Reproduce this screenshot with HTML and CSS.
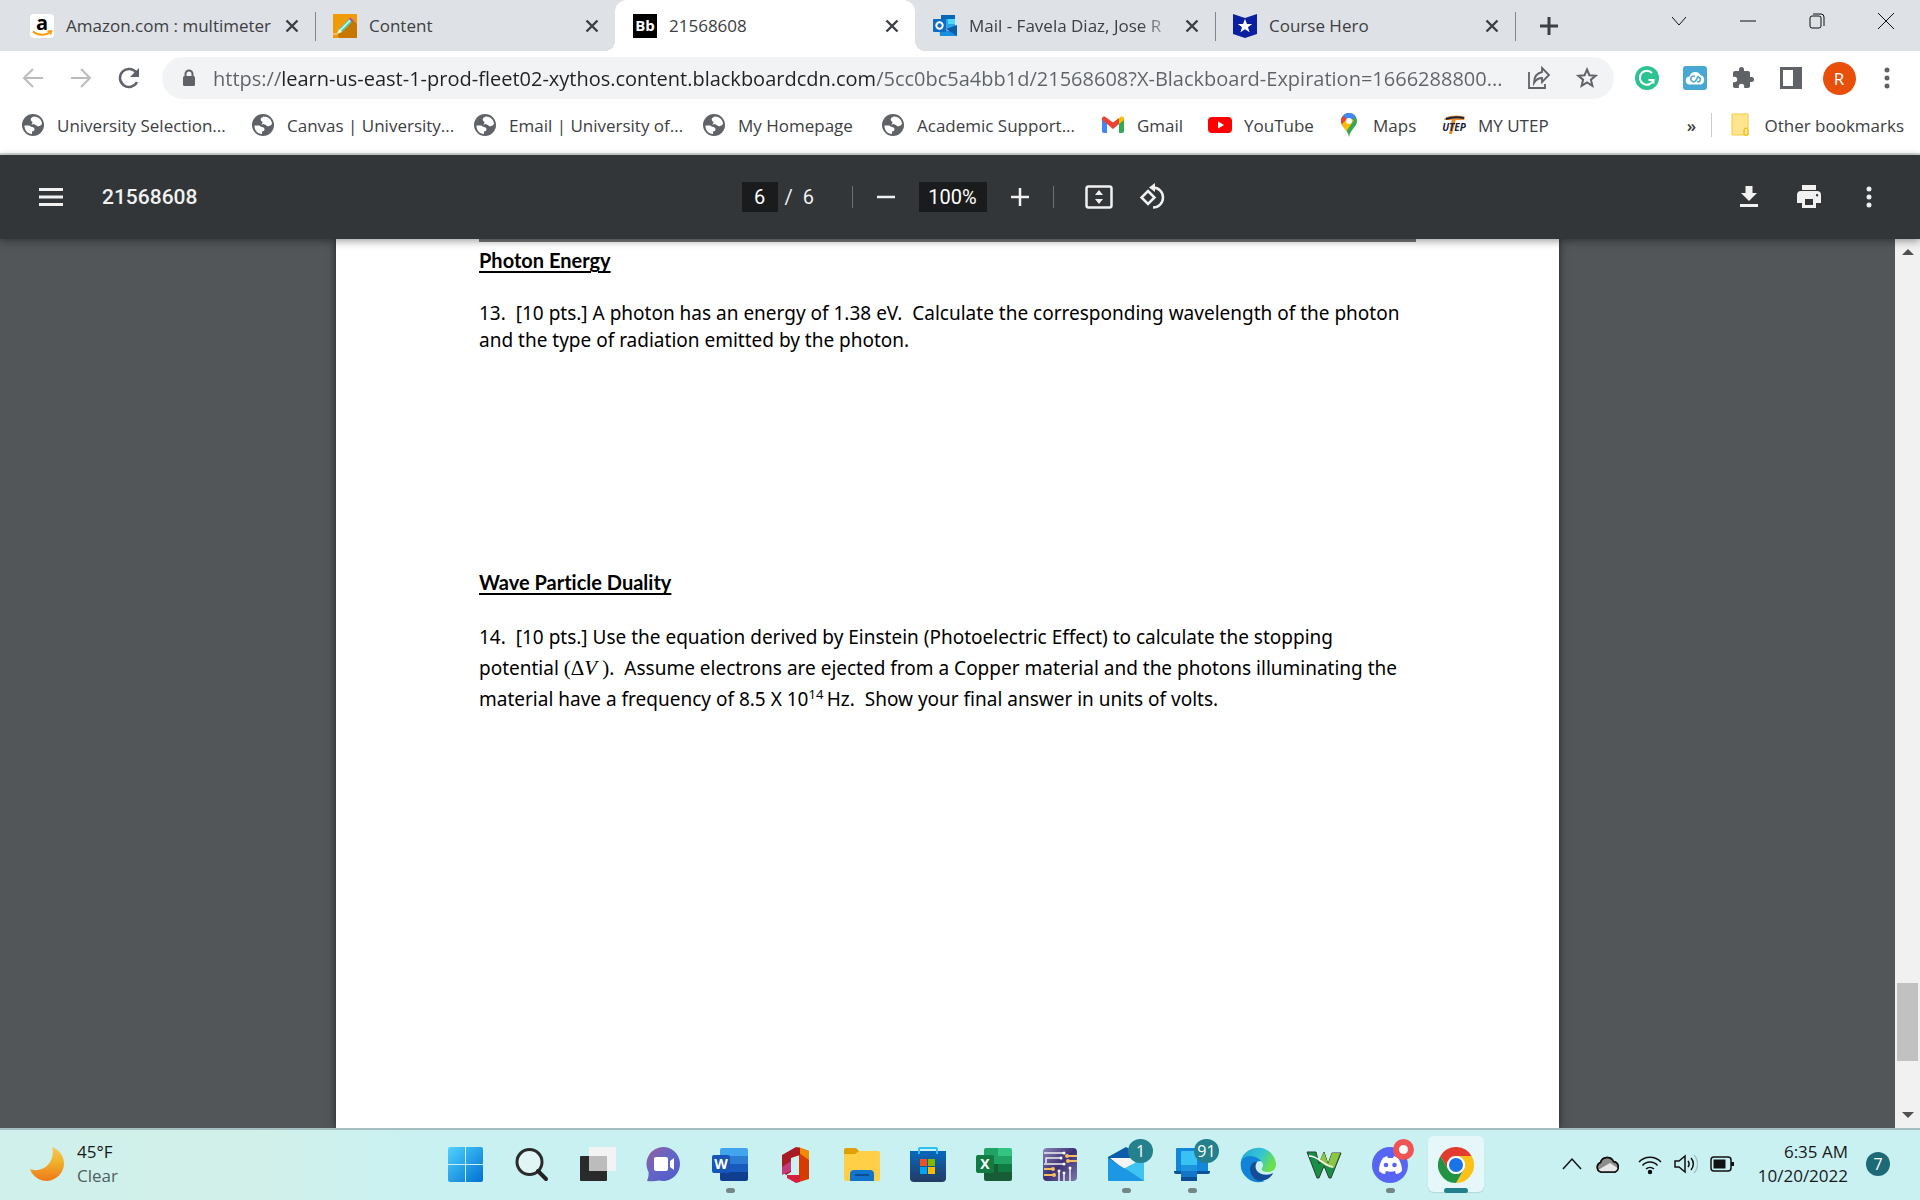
FILE: index.html
```html
<!DOCTYPE html>
<html lang="en">
<head>
    <meta charset="UTF-8">
    <meta name="viewport" content="width=device-width, initial-scale=1.0">
    <title>21568608</title>
    <link rel="stylesheet" href="styles.css">
</head>
<body>
    <!-- Shared icons -->
    <svg class="sprite" aria-hidden="true">
        <symbol id="close" viewBox="0 0 24 24"><path d="M6.500 6.500l11 11M17.500 6.500l-11 11" stroke="#3c4043" stroke-width="2.400"/></symbol>
        <symbol id="globe" viewBox="0 0 24 24"><circle cx="12" cy="12" r="11" fill="#5f6368"/><path d="M3.500 12.500H8c1 0 1.500 1.500 3 1.500 1.500 0 2.500 1 2.500 2.500 0 1.400-1 1.800-2.500 2v2.500c-4.500 0-7.700-4-7.500-8.500z" fill="#fff"/><path d="M12.500 3.500c-1.500 1-2.800 1.500-2.800 3.200 0 1.500 1.800 1.300 1.800 2.800 0 1-.8 1.500-1.500 1.500 1 .8 3.500.2 4.800 1 1 1 2.500 2 4.700.5l1.500-1.500c0-4-3.500-7.500-8.500-7.500z" fill="#fff"/></symbol>
        <symbol id="dots" viewBox="0 0 24 24"><circle cx="12" cy="4" r="2.500"/><circle cx="12" cy="12" r="2.500"/><circle cx="12" cy="20" r="2.500"/></symbol>
    </svg>

    <header class="browser">
        <div class="tab-strip">
            <div class="tab">
                <svg class="icon" viewBox="0 0 24 24"><rect width="24" height="24" rx="4" fill="#fff"/><text x="12" y="16" text-anchor="middle" class="logo-text" font-size="20">a</text><path d="M3 17.500c5 4.300 12.500 4.300 17 .8" fill="none" stroke="#f90" stroke-width="2"/><path d="M17.500 17.300l4-.4-1 3.800" fill="none" stroke="#f90" stroke-width="1.500"/></svg>
                <span class="tab-title">Amazon.com : multimeter</span>
                <button class="tab-close" aria-label="Close tab"><svg><use href="#close"/></svg></button>
            </div>
            <div class="tab divided">
                <svg class="icon" viewBox="0 0 24 24"><rect width="24" height="24" fill="#f09a0a"/><path d="M20 6l4 4v14H6l-2-4z" fill="#c77700"/><path d="M4 20l2-5L16 5l3 3L9 18z" fill="#4fd0b8"/><path d="M7 16.500L17.500 6" stroke="#d8fff0" stroke-width="1.500"/><path d="M4 20l2-5 3 3z" fill="#fff3cf"/><path d="M16 5l1.500-1.500 3 3L19 8z" fill="#9b4fc4"/><path d="M0 20h5" stroke="#ffd9a0"/></svg>
                <span class="tab-title">Content</span>
                <button class="tab-close" aria-label="Close tab"><svg><use href="#close"/></svg></button>
            </div>
            <div class="tab active">
                <svg class="icon" viewBox="0 0 24 24"><rect width="24" height="24"/><text x="12" y="17" text-anchor="middle" class="logo-text light" font-size="15">Bb</text></svg>
                <span class="tab-title">21568608</span>
                <button class="tab-close" aria-label="Close tab"><svg><use href="#close"/></svg></button>
            </div>
            <div class="tab">
                <svg class="icon" viewBox="0 0 24 24"><rect x="8" y="1" width="14" height="14" rx="1" fill="#28a8ea"/><path d="M8 1h14v4H8z" fill="#0a67b5"/><path d="M15 5h7v5h-7z" fill="#50d9ff"/><path d="M6 11l9 6 9-6v10a1 1 0 0 1-1 1H7z" fill="#1490df"/><path d="M24 11v11L13 15z" fill="#0f5ba6"/><rect y="5" width="13" height="13" rx="1" fill="#0f6cc4"/><circle cx="6.500" cy="11.500" r="3.200" fill="none" stroke="#fff" stroke-width="2"/></svg>
                <span class="tab-title faded">Mail - Favela Diaz, Jose R</span>
                <button class="tab-close" aria-label="Close tab"><svg><use href="#close"/></svg></button>
            </div>
            <div class="tab divided">
                <svg class="icon" viewBox="0 0 24 24"><path d="M0 0l12 4 12-4v20l-12 4-12-4z" fill="#0b1fa0"/><path d="M12 5l2 5h5.200l-4.200 3.300 1.600 5-4.600-3-4.600 3 1.600-5L4.800 10H10z" fill="#fff"/></svg>
                <span class="tab-title">Course Hero</span>
                <button class="tab-close" aria-label="Close tab"><svg><use href="#close"/></svg></button>
            </div>
            <div class="new-tab divided">
                <button aria-label="New tab"><svg class="icon" viewBox="0 0 24 24"><path d="M12 3v18M3 12h18" stroke="#3c4043" stroke-width="3"/></svg></button>
            </div>
            <div class="window-controls">
                <button aria-label="Search tabs"><svg viewBox="0 0 20 20"><path d="M3 6l7 8 7-8"/></svg></button>
                <button aria-label="Minimize"><svg viewBox="0 0 20 20"><path d="M2 10h16"/></svg></button>
                <button aria-label="Restore"><svg viewBox="0 0 20 20"><rect x="3" y="5" width="11" height="12" rx="2"/><path d="M6 3h8a3 3 0 0 1 3 3v9"/></svg></button>
                <button aria-label="Close"><svg viewBox="0 0 20 20"><path d="M2 2l16 16M18 2L2 18"/></svg></button>
            </div>
        </div>

        <div class="toolbar">
            <button class="tool muted" aria-label="Back"><svg class="icon" viewBox="0 0 24 24"><path d="M22 12H3M12 3l-9 9 9 9"/></svg></button>
            <button class="tool muted" aria-label="Forward"><svg class="icon" viewBox="0 0 24 24"><path d="M2 12h19M12 3l9 9-9 9"/></svg></button>
            <button class="tool" aria-label="Reload"><svg class="icon" viewBox="0 0 24 24"><path d="M19.500 7A9 9 0 1 0 20 16" stroke-width="2.500"/><path d="M22 2v9h-9z" fill="#5f6368" stroke="none"/></svg></button>
            <form class="address-bar">
                <svg class="lock" viewBox="0 0 16 18"><rect x="2" y="7" width="12" height="10" rx="1.500" fill="#5f6368"/><path d="M4.500 8V5a3.500 3.500 0 0 1 7 0v3" fill="none" stroke="#5f6368" stroke-width="2"/></svg>
                <input class="url" type="text" aria-label="Address" value="https://learn-us-east-1-prod-fleet02-xythos.content.blackboardcdn.com/5cc0bc5a4bb1d/21568608?X-Blackboard-Expiration=1666288800...">
                <button type="button" class="tool" aria-label="Share"><svg class="icon" viewBox="0 0 24 24"><path d="M2 6v16h16v-4" stroke-width="1.800"/><path d="M15 2l7 7-7 7v-4c-4 0-6 1.500-8 5 0-6 3-10 8-11z" stroke-width="1.800"/></svg></button>
                <button type="button" class="tool" aria-label="Bookmark this page"><svg class="icon" viewBox="0 0 24 24"><path d="M12 3.500l2.400 5.700 6.200.5-4.700 4 1.500 6.100-5.400-3.300-5.400 3.300 1.500-6.100-4.700-4 6.200-.5z"/></svg></button>
            </form>
            <div class="extensions">
                <button class="tool" aria-label="Grammarly"><svg class="icon" viewBox="0 0 24 24"><circle cx="12" cy="12" r="12" fill="#2bc391" stroke="none"/><path d="M17 7a7 7 0 1 0 1.500 7H13.500M18.500 13.500v4" stroke="#fff"/></svg></button>
                <button class="tool" aria-label="Cloud extension"><svg class="icon" viewBox="0 0 24 24"><rect width="24" height="24" rx="3" fill="#49a8d3" stroke="none"/><path d="M7 18.500a4 4 0 0 1-.5-8 6 6 0 0 1 11-1.500 5 5 0 0 1 .5 9.500z" fill="#fff" stroke="none"/><path d="M12 10.500a2.800 2.800 0 1 0 .5 4.500l3-5M14 11.500a2.300 2.300 0 1 1 0 4" stroke="#49a8d3" stroke-width="1.500"/></svg></button>
                <button class="tool" aria-label="Extensions"><svg class="icon" viewBox="0 0 24 24"><path d="M20.500 11H19V7c0-1.100-.9-2-2-2h-4V3.500a2.500 2.500 0 0 0-5 0V5H4c-1.100 0-2 .9-2 2v3.800h1.500a2.700 2.700 0 0 1 0 5.400H2V20c0 1.100.9 2 2 2h3.800v-1.500a2.700 2.700 0 0 1 5.400 0V22H17c1.100 0 2-.9 2-2v-4h1.500a2.500 2.500 0 0 0 0-5z" fill="#5f6368" stroke="none"/></svg></button>
                <button class="tool" aria-label="Side panel"><svg class="icon" viewBox="0 0 24 24"><path d="M1 1h22v22H1zM4 4v16h10V4z" fill="#5f6368" fill-rule="evenodd" stroke="none"/></svg></button>
                <button class="tool" aria-label="Profile"><span class="avatar">R</span></button>
                <button class="tool" aria-label="Menu"><svg class="icon filled"><use href="#dots"/></svg></button>
            </div>
        </div>

        <nav class="bookmarks">
            <a href="#"><svg class="icon"><use href="#globe"/></svg>University Selection...</a>
            <a href="#"><svg class="icon"><use href="#globe"/></svg>Canvas | University...</a>
            <a href="#"><svg class="icon"><use href="#globe"/></svg>Email | University of...</a>
            <a href="#"><svg class="icon"><use href="#globe"/></svg>My Homepage</a>
            <a href="#"><svg class="icon"><use href="#globe"/></svg>Academic Support...</a>
            <a href="#"><svg class="icon" viewBox="0 0 24 24"><path d="M1 6v12a2 2 0 0 0 2 2h3V9z" fill="#4285f4"/><path d="M23 6v12a2 2 0 0 1-2 2h-3V9z" fill="#34a853"/><path d="M18 5v6l5-4V6c0-2.500-2-3-3.500-2z" fill="#fbbc04"/><path d="M1 6c0-2.500 2-3 3.500-2L12 9.500 18 5v6l-6 5-6-5L1 7z" fill="#ea4335"/></svg>Gmail</a>
            <a href="#"><svg class="icon" viewBox="0 0 24 24"><rect y="4" width="24" height="16" rx="4" fill="#f00"/><path d="M10 8.500l6 3.500-6 3.500z" fill="#fff"/></svg>YouTube</a>
            <a href="#"><svg class="icon" viewBox="0 0 24 24"><defs><clipPath id="pin"><path d="M12 0a8 8 0 0 1 8 8c0 6-6.500 8-8 16-1.500-8-8-10-8-16a8 8 0 0 1 8-8z"/></clipPath></defs><g clip-path="url(#pin)"><path d="M0 0h24v24H0z" fill="#34a853"/><path d="M5 0h15v3l-8 6-7-6z" fill="#4285f4"/><path d="M0 3h6l5 4-7 7z" fill="#ea4335"/><path d="M3 13l8-8 6 2-8 12z" fill="#fbbc04"/></g><circle cx="12" cy="8" r="3" fill="#fff"/></svg>Maps</a>
            <a href="#"><svg class="icon" viewBox="0 0 24 24"><path d="M3 5c6-3 13-3 20-1l-1 3H2zM10 6h4l-4 15H7z" fill="#e98b2a"/><path d="M4 6c6-2 12-2 18-1" fill="none" stroke="#16213f" stroke-width="2"/><text x="12" y="18" text-anchor="middle" class="utep-text" font-size="10">UTEP</text></svg>MY UTEP</a>
            <button class="overflow" aria-label="More bookmarks">»</button>
            <a href="#" class="other"><svg class="icon" viewBox="0 0 24 24"><path d="M4 1h16v21H4z" fill="#ffe58f" stroke="#f2cb3c"/><path d="M16 22v-5a2 2 0 0 1 4 0v5z" fill="#ffe58f" stroke="#e6b800"/></svg>Other bookmarks</a>
        </nav>
    </header>

    <main class="viewer">
        <div class="pdf-toolbar">
            <div class="pdf-start">
                <button aria-label="Menu"><svg class="pdf-icon" viewBox="0 0 24 24"><path d="M0 4.500h24M0 12h24M0 19.500h24" stroke="#f1f1f1" stroke-width="3"/></svg></button>
                <h1>21568608</h1>
            </div>
            <div class="pdf-center">
                <input class="page-number" type="text" value="6" aria-label="Page number">
                <span class="page-total">/&nbsp; 6</span>
                <span class="rule"></span>
                <button aria-label="Zoom out"><svg class="pdf-icon" viewBox="0 0 24 24"><path d="M3 12h18" stroke="#f1f1f1" stroke-width="2.500"/></svg></button>
                <input class="zoom" type="text" value="100%" aria-label="Zoom level">
                <button aria-label="Zoom in"><svg class="pdf-icon" viewBox="0 0 24 24"><path d="M3 12h18M12 3v18" stroke="#f1f1f1" stroke-width="2.500"/></svg></button>
                <span class="rule"></span>
                <button class="fit" aria-label="Fit to page"><svg viewBox="0 0 28 24"><rect x="1.500" y="1.500" width="25" height="21" rx="2" fill="none" stroke="#f1f1f1" stroke-width="2.500"/><path d="M14 5l4 5h-8zM14 19l4-5h-8z" fill="#f1f1f1"/></svg></button>
                <button aria-label="Rotate"><svg viewBox="0 0 28 28"><path d="M8 8l6.500 6.500L8 21l-6.500-6.500z" fill="none" stroke="#f1f1f1" stroke-width="2.500"/><path d="M13 4.500a10 10 0 1 1 0 20" fill="none" stroke="#f1f1f1" stroke-width="2.500"/><path d="M9 4.500L15 0v9z" fill="#f1f1f1"/></svg></button>
            </div>
            <div class="pdf-end">
                <button aria-label="Download"><svg class="pdf-icon" viewBox="0 0 24 24"><path d="M8.500 1h7v7H20l-8 8-8-8h4.500zM3 19h18v3H3z" fill="#f1f1f1"/></svg></button>
                <button aria-label="Print"><svg class="pdf-icon" viewBox="0 0 24 24"><path d="M5 0h14v5H5zM4 6h16a4 4 0 0 1 4 4v8h-5v5H5v-5H0v-8a4 4 0 0 1 4-4zM8 14v6h8v-6zM20 9a1.200 1.200 0 1 0 .1 2.400A1.200 1.200 0 0 0 20 9z" fill="#f1f1f1" fill-rule="evenodd"/></svg></button>
                <button aria-label="More actions"><svg class="pdf-icon light-fill"><use href="#dots"/></svg></button>
            </div>
        </div>

        <div class="pdf-body">
            <div class="canvas">
                <article class="page">
                    <hr>
                    <h2>Photon Energy</h2>
                    <p class="question">13.&nbsp; [10 pts.] A photon has an energy of 1.38 eV.&nbsp; Calculate the corresponding wavelength of the photon<br>and the type of radiation emitted by the photon.</p>
                    <h2>Wave Particle Duality</h2>
                    <p class="question spaced">14.&nbsp; [10 pts.] Use the equation derived by Einstein (Photoelectric Effect) to calculate the stopping<br>potential <span class="math">(Δ<i>V</i> )</span>.&nbsp; Assume electrons are ejected from a Copper material and the photons illuminating the<br>material have a frequency of 8.5 X 10<sup>14 </sup>Hz.&nbsp; Show your final answer in units of volts.</p>
                </article>
            </div>
            <div class="scrollbar">
                <span class="arrow up"></span>
                <div class="track"><div class="thumb"></div></div>
                <span class="arrow down"></span>
            </div>
        </div>
    </main>

    <footer class="taskbar">
        <div class="weather">
            <svg viewBox="0 0 36 36"><defs><linearGradient id="moon" x2="0" y2="1"><stop stop-color="#f9c75a"/><stop offset=".4" stop-color="#efb52d"/><stop offset="1" stop-color="#f07818"/></linearGradient></defs><path d="M23 0a18 18 0 1 1-23 23c14 4 26-7 23-23z" fill="url(#moon)"/></svg>
            <div>
                <div>45°F</div>
                <div class="condition">Clear</div>
            </div>
        </div>

        <div class="apps">
            <button aria-label="Start"><svg viewBox="0 0 36 36"><defs><linearGradient id="win" x2="1" y2="1"><stop stop-color="#4fd3ff"/><stop offset="1" stop-color="#0070d0"/></linearGradient></defs><path d="M2 0h15v17H0V2a2 2 0 0 1 2-2zM18 0h15a2 2 0 0 1 2 2v15H18zM0 18h17v17H2a2 2 0 0 1-2-2zM18 18h17v15a2 2 0 0 1-2 2H18z" fill="url(#win)"/></svg></button>
            <button aria-label="Search"><svg viewBox="0 0 36 36"><circle cx="15.500" cy="15" r="12.500" fill="#e2f5f5" stroke="#2b2b2b" stroke-width="3"/><path d="M24 24l8 8" stroke="#222" stroke-width="4" stroke-linecap="round"/></svg></button>
            <button aria-label="Task view"><svg viewBox="0 0 36 36"><rect y="9" width="27" height="25" rx="1" fill="#2a2a2a"/><rect x="9" width="27" height="24" rx="1" fill="#f3f3f3"/><path d="M9 9h18v15H9z" fill="#bcbcbc"/></svg></button>
            <button aria-label="Chat"><svg viewBox="0 0 36 36"><defs><linearGradient id="chat" x2="1" y2="1"><stop stop-color="#96609f"/><stop offset=".5" stop-color="#6264c7"/><stop offset="1" stop-color="#5059c9"/></linearGradient></defs><path d="M18 0a17 17 0 1 1-5 33.500c-4 1-8 .8-12 .5 1-3 2-6 1.500-9A17 17 0 0 1 18 0z" fill="url(#chat)"/><rect x="8" y="10" width="14" height="14" rx="2" fill="#fff"/><path d="M24 14l4-3v12l-4-3z" fill="#fff"/></svg></button>
            <button class="running" aria-label="Word"><svg viewBox="0 0 36 36"><path d="M10 1h24a2 2 0 0 1 2 2v6H8V3a2 2 0 0 1 2-2z" fill="#41a5ee"/><path d="M8 9h28v8H8z" fill="#2b7cd3"/><path d="M8 17h28v8H8z" fill="#185abd"/><path d="M8 25h28v7a2 2 0 0 1-2 2H10a2 2 0 0 1-2-2z" fill="#103f91"/><rect y="8" width="18" height="18" rx="2" fill="#1756b8"/><text x="9" y="22" text-anchor="middle" class="logo-text light" font-size="14">W</text></svg></button>
            <button aria-label="Office"><svg viewBox="0 0 36 36"><path d="M20 0l11 4v28l-10 3V6z" fill="#d83b01"/><path d="M20 0l11 4v9L21 6z" fill="#f08a00"/><path d="M18 0l4 1v7l-9 3v14l-5 3-4-4V8z" fill="#a91b22"/><path d="M4 20v8l9-4V14z" fill="#c23b7c"/><path d="M9 28h13v7l-4 1-9-5z" fill="#d51f3c"/></svg></button>
            <button aria-label="File Explorer"><svg viewBox="0 0 36 36"><path d="M2 1h10l4 4v6H0V3a2 2 0 0 1 2-2z" fill="#e0a000"/><path d="M0 7h11l4-3h19a2 2 0 0 1 2 2v26a2 2 0 0 1-2 2H2a2 2 0 0 1-2-2z" fill="#ffcf48"/><path d="M6 34v-7a4 4 0 0 1 4-4h16a4 4 0 0 1 4 4v7z" fill="#1274cb"/><path d="M11 28h14" stroke="#0a4f94" stroke-width="2"/></svg></button>
            <button aria-label="Microsoft Store"><svg viewBox="0 0 36 36"><defs><linearGradient id="store" x2="0" y2="1"><stop stop-color="#0669bd"/><stop offset="1" stop-color="#243a63"/></linearGradient></defs><path d="M9 6V2a1 1 0 0 1 1-1h16a1 1 0 0 1 1 1v4" fill="none" stroke="#2fc0f2" stroke-width="2"/><path d="M0 4h36v27a4 4 0 0 1-4 4H4a4 4 0 0 1-4-4z" fill="url(#store)"/><path d="M9 4v3M27 4v3" stroke="#2fc0f2" stroke-width="2"/><path d="M10 12h7v7h-7z" fill="#f25022"/><path d="M18 12h7v7h-7z" fill="#7fba00"/><path d="M10 20h7v7h-7z" fill="#00a4ef"/><path d="M18 20h7v7h-7z" fill="#ffb900"/></svg></button>
            <button aria-label="Excel"><svg viewBox="0 0 36 36"><path d="M10 1h12v16H8V3a2 2 0 0 1 2-2z" fill="#21a366"/><path d="M22 1h12a2 2 0 0 1 2 2v6H22z" fill="#33c481"/><path d="M22 9h14v8H22z" fill="#21a366"/><path d="M8 17h14v8H8z" fill="#185c37"/><path d="M22 17h14v8H22z" fill="#107c41"/><path d="M8 25h28v7a2 2 0 0 1-2 2H10a2 2 0 0 1-2-2z" fill="#185c37"/><rect y="8" width="18" height="18" rx="2" fill="#107c41"/><text x="9" y="22" text-anchor="middle" class="logo-text light" font-size="14">X</text></svg></button>
            <button aria-label="Circuit app"><svg viewBox="0 0 36 36"><defs><linearGradient id="chip" x2="1" y2="1"><stop stop-color="#8a84b4"/><stop offset=".5" stop-color="#3d3075"/><stop offset="1" stop-color="#7d77a8"/></linearGradient></defs><rect x="1" y="1" width="34" height="33" rx="4" fill="url(#chip)"/><path d="M2 6h20M2 17h20M4 16v-5h15M17 34V25M22 34V27M28 34V22" fill="none" stroke="#eee" stroke-width="1.500"/><path d="M35 9h-9M35 14h-8M2 22h9M2 28h10" stroke="#f5bd62" stroke-width="2"/><g fill="#fff"><circle cx="22" cy="6" r="1.500"/><circle cx="22" cy="17" r="1.500"/><circle cx="19" cy="11" r="1.500"/><circle cx="17" cy="24" r="1.500"/><circle cx="22" cy="26" r="1.500"/><circle cx="28" cy="21" r="1.500"/></g><g fill="#f5bd62"><circle cx="25" cy="9" r="2"/><circle cx="26" cy="14" r="2"/><circle cx="11" cy="22" r="2"/><circle cx="12" cy="28" r="2"/></g></svg></button>
            <button class="running" aria-label="Mail"><svg viewBox="0 0 36 36"><path d="M0 10L18 0l18 10v8H0z" fill="#0b5cab"/><path d="M2 11h32L20 26z" fill="#f5f5f5"/><path d="M0 11l36 23H1a1 1 0 0 1-1-1z" fill="#1c97e3"/><path d="M36 11v22a1 1 0 0 1-1 1L17 21z" fill="#3fc4f2"/><path d="M17 21l19 13H1z" fill="#1c97e3"/></svg><span class="badge">1</span></button>
            <button class="running" aria-label="Phone Link"><svg viewBox="0 0 36 36"><rect x="2" y="1" width="32" height="24" rx="1" fill="#1286d8"/><path d="M0 24h36v1a2 2 0 0 1-2 2H2a2 2 0 0 1-2-2z" fill="#0c5296"/><rect x="7" y="4" width="16" height="30" rx="1" fill="#37c2f3"/><path d="M7 18h16v6H7z" fill="#1d94dd"/><path d="M7 24h16v6H7z" fill="#1376c8"/><path d="M7 30h16v4H7z" fill="#0c4f94"/></svg><span class="badge">91</span></button>
            <button aria-label="Edge"><svg viewBox="0 0 36 36"><defs><linearGradient id="edge" x2="1" y2=".4"><stop stop-color="#23a5dc"/><stop offset=".6" stop-color="#36c6d0"/><stop offset="1" stop-color="#6be04b"/></linearGradient></defs><path d="M1 13a18 18 0 0 1 35 4c0 6-4 8-8 8-5 0-7-2-6-4 3-4-1-8-5-8-7 0-12 3-16 0z" fill="url(#edge)"/><path d="M1 14c3-5 9-6 14-4 4 1 6 4 6 4-6 0-9 5-7 11 2 5 6 9 11 9A18 18 0 0 1 1 14z" fill="#1184d8"/><path d="M14 15c-5 3-5 10-1 15 3 4 8 5 12 3 4-1 7-4 8-7-5 3-13 2-16-2-2-3-2-6 0-9z" fill="#134d98"/></svg></button>
            <button aria-label="W app"><svg viewBox="0 0 36 36"><path d="M1 5h9l3 12 5-12 4 12 4-11h9L25 31h-2l-5-12-5 12h-2z" fill="#159044" stroke="#383838"/><path d="M15 11l3-6 4 12 4-11h8l-6 15c-6 0-10-3-14-7z" fill="#8dc63f"/><path d="M3 9c10 0 13 9 24 11" fill="none" stroke="#fff" stroke-width="1.500"/></svg></button>
            <button class="running" aria-label="Discord"><svg viewBox="0 0 36 36"><circle cx="18" cy="18" r="18" fill="#5865f2"/><path d="M11 11l4-2 1 2h5l1-2 4 2c3 4 4 9 4 13-2 2-4 3-6 3l-1-3c-3 1-6 1-9 0l-1 3c-2 0-4-1-6-3 0-4 1-9 4-13z" fill="#fff"/><circle cx="14" cy="18" r="2.300" fill="#5865f2"/><circle cx="22.500" cy="18" r="2.300" fill="#5865f2"/></svg><span class="badge record"></span></button>
            <button class="running current" aria-label="Chrome"><svg viewBox="0 0 36 36"><path d="M2.400 9A18 18 0 0 1 33.600 9H18a9 9 0 0 0-7.800 13.500z" fill="#e33b2e"/><path d="M33.600 9A18 18 0 0 1 18 36l7.800-13.500A9 9 0 0 0 18 9z" fill="#fbc116"/><path d="M18 36A18 18 0 0 1 2.400 9l7.800 13.500A9 9 0 0 0 25.800 22.500z" fill="#229342"/><circle cx="18" cy="18" r="9" fill="#fff"/><circle cx="18" cy="18" r="7" fill="#1a73e8"/></svg></button>
        </div>

        <div class="tray">
            <button aria-label="Show hidden icons"><svg viewBox="0 0 24 24"><path d="M3 17l9-10 9 10"/></svg></button>
            <button aria-label="OneDrive"><svg viewBox="0 0 24 24"><path d="M5 20a5 5 0 0 1-.5-9.500 7 7 0 0 1 13-1A5.500 5.500 0 0 1 19 20z" fill="#8d8d8d"/><path d="M2 18l12-7 9 6-3 3H5z" fill="#e8e8e8" stroke="none"/><path d="M5 20a5 5 0 0 1-.5-9.500 7 7 0 0 1 13-1A5.500 5.500 0 0 1 19 20z"/></svg></button>
            <button aria-label="Wi-Fi"><svg viewBox="0 0 24 24"><path d="M1 10a15 15 0 0 1 22 0M4.500 13.500a10 10 0 0 1 15 0M8 17a6 6 0 0 1 8 0"/><circle cx="12" cy="20" r="1.500" fill="#111"/></svg></button>
            <button aria-label="Volume"><svg viewBox="0 0 24 24"><path d="M1 9h4l6-5v16l-6-5H1zM14 9a5 5 0 0 1 0 6M17 6a9 9 0 0 1 0 12"/><path d="M20 3a13 13 0 0 1 0 18" stroke="#a4c4c4"/></svg></button>
            <button aria-label="Battery"><svg viewBox="0 0 24 24"><rect x="1" y="5" width="20" height="14" rx="3"/><path d="M3.500 7.500h12v9h-12zM21 10h3v4h-3z" fill="#111" stroke="none"/></svg></button>
            <time>6:35 AM<br>10/20/2022</time>
            <span class="notifications">7</span>
        </div>
    </footer>
</body>
</html>
```
FILE: styles.css
```css
:root {
    --tab-bg: #dee1e6;
    --chrome-text: #3c4043;
    --chrome-icon: #5f6368;
    --pdf-bar: #323639;
    --pdf-bg: #525659;
    --badge: #25808d;
}

* {
    box-sizing: border-box;
    margin: 0;
    padding: 0;
}

body {
    font-family: "Open Sans", "Noto Sans", sans-serif;
    font-size: 17px;
    color: var(--chrome-text);
    height: 100vh;
    display: flex;
    flex-direction: column;
    overflow: hidden;
}

button {
    background: none;
    border: none;
    color: inherit;
    font: inherit;
    display: flex;
    align-items: center;
    justify-content: center;
    cursor: pointer;
}

.sprite {
    display: none;
}

.icon {
    width: 24px;
    height: 24px;
    flex: none;
}

.filled {
    fill: var(--chrome-icon);
}

.logo-text {
    font-family: "Open Sans", sans-serif;
    font-weight: 700;
}

.light {
    fill: #fff;
}

.utep-text {
    font-family: "Open Sans", sans-serif;
    font-weight: 700;
    font-style: italic;
    fill: #16213f;
}

/* Tabs */
.tab-strip {
    display: flex;
    height: 51px;
    padding-left: 15px;
    background: var(--tab-bg);
}

.tab {
    position: relative;
    display: flex;
    align-items: center;
    flex: 0 1 300px;
    min-width: 0;
    padding: 0 11px 0 18px;
}

.tab:first-child {
    padding-left: 15px;
}

.tab.active {
    background: #fff;
    border-radius: 12px 12px 0 0;
}

/* curved feet of the active tab */
.tab.active::before,
.tab.active::after {
    content: "";
    position: absolute;
    bottom: 0;
    width: 10px;
    height: 10px;
}

.tab.active::before {
    right: 100%;
    background: radial-gradient(circle at 0 0, transparent 10px, #fff 10px);
}

.tab.active::after {
    left: 100%;
    background: radial-gradient(circle at 100% 0, transparent 10px, #fff 10px);
}

.divided::before {
    content: "";
    position: absolute;
    left: 0;
    top: 12px;
    width: 1px;
    height: 29px;
    background: #80868b;
}

.tab-title {
    flex: 1;
    margin: 0 3px 0 12px;
    white-space: nowrap;
}

.tab-title.faded {
    mask-image: linear-gradient(to left, transparent, #000 36px);
}

.tab-close,
.tab-close svg {
    width: 24px;
    height: 24px;
}

.new-tab {
    position: relative;
    display: flex;
    align-items: center;
    padding-left: 22px;
}

.window-controls {
    display: flex;
    height: 42px;
    margin-left: auto;
}

.window-controls button {
    width: 69px;
}

.window-controls svg {
    width: 20px;
    height: 20px;
    fill: none;
    stroke: #111;
}

/* Address row */
.toolbar {
    display: flex;
    align-items: center;
    height: 54px;
    padding: 0 9px;
}

.tool {
    width: 48px;
    height: 42px;
    flex: none;
}

.tool svg:not(.filled) {
    fill: none;
    stroke: var(--chrome-icon);
    stroke-width: 2;
}

.muted svg:not(.filled) {
    stroke: #babcbe;
}

.address-bar {
    display: flex;
    align-items: center;
    flex: 1;
    min-width: 0;
    height: 42px;
    margin-left: 9px;
    padding: 0 3px 0 19px;
    border-radius: 21px;
    background: #f1f3f4;
}

.lock {
    width: 16px;
    height: 18px;
    flex: none;
}

/* scheme and path are greyed, the host stays dark */
.url {
    flex: 1;
    min-width: 0;
    height: 36px;
    margin: 0 10px 0 16px;
    border: none;
    outline: none;
    font: 20px "Open Sans", "Noto Sans", sans-serif;
    color: transparent;
    background: linear-gradient(to right, #5f6368 69px, #202124 69px, #202124 663px, #5f6368 663px);
    background-clip: text;
    -webkit-background-clip: text;
}

.extensions {
    display: flex;
    margin-left: 9px;
}

.avatar {
    width: 33px;
    height: 33px;
    border-radius: 50%;
    background: #e8500a;
    color: #fff;
    line-height: 33px;
    text-align: center;
}

/* Bookmarks */
.bookmarks {
    display: grid;
    grid-template-columns: 230px 222px 229px 179px 220px 107px 129px 105px 1fr 40px auto;
    align-items: center;
    height: 50px;
    padding: 0 16px 8px 21px;
    border-bottom: 2px solid #d5dad9;
}

.bookmarks a {
    display: flex;
    align-items: center;
    gap: 12px;
    color: inherit;
    text-decoration: none;
    white-space: nowrap;
}

.bookmarks .other {
    padding-left: 16px;
    border-left: 1px solid #c8cacd;
}

.overflow {
    font-weight: 600;
}

/* PDF viewer */
.viewer {
    flex: 1;
    min-height: 0;
    display: flex;
    flex-direction: column;
    background: var(--pdf-bg);
}

.pdf-toolbar {
    position: relative;
    z-index: 1;
    display: flex;
    align-items: center;
    height: 84px;
    padding: 0 21px;
    background: var(--pdf-bar);
    color: #f1f1f1;
    font-family: Roboto, sans-serif;
    font-size: 20px;
    box-shadow: 0 2px 8px rgba(0, 0, 0, 0.4);
}

.pdf-toolbar button {
    width: 60px;
    height: 48px;
}

.pdf-toolbar svg {
    width: 28px;
    height: 28px;
}

.pdf-toolbar .pdf-icon {
    width: 24px;
    height: 24px;
}

.light-fill {
    fill: #f1f1f1;
}

.pdf-start,
.pdf-end {
    flex: 1;
    display: flex;
    align-items: center;
}

.pdf-end {
    justify-content: flex-end;
}

.pdf-start h1 {
    margin-left: 33px;
    font-size: 21px;
    font-weight: 500;
}

.pdf-center {
    display: flex;
    align-items: center;
}

.pdf-center input {
    height: 30px;
    border: none;
    background: #191b1c;
    color: #fff;
    font: 20px Roboto, sans-serif;
    text-align: center;
}

.page-number {
    width: 36px;
}

.zoom {
    width: 68px;
}

.page-total {
    width: 74px;
    padding-left: 7px;
}

.rule {
    width: 1px;
    height: 22px;
    background: #6d7072;
}

.pdf-center button {
    width: 66px;
}

.pdf-center .fit {
    width: 60px;
    margin-left: 15px;
}

.pdf-center .fit + button {
    width: 50px;
}

.pdf-start button {
    width: 36px;
    margin-left: 12px;
}

.pdf-body {
    flex: 1;
    min-height: 0;
    display: flex;
}

.canvas {
    flex: 1;
    display: flex;
    justify-content: center;
    overflow: hidden;
}

.page {
    width: 100%;
    max-width: 1223px;
    padding: 0 143px;
    background: #fff;
    color: #000;
    font-family: "Noto Sans", sans-serif;
    font-size: 19px;
    line-height: 27px;
    box-shadow: 0 0 8px rgba(0, 0, 0, 0.6);
}

.page hr {
    height: 3px;
    border: none;
    background: #777;
}

.page h2 {
    margin-top: 5px;
    font-family: Lato, sans-serif;
    font-size: 20px;
    font-variant-ligatures: none;
    text-decoration: underline;
    text-decoration-thickness: 2px;
    text-underline-offset: 3px;
}

.question {
    margin-top: 26px;
    white-space: nowrap;
}

.question + h2 {
    margin-top: 215px;
}

.question.spaced {
    line-height: 31px;
}

.question sup {
    font-size: 13px;
    line-height: 0;
}

.math {
    font-family: "Liberation Serif", serif;
    font-size: 21px;
    line-height: 0;
}

.scrollbar {
    display: flex;
    flex-direction: column;
    align-items: center;
    width: 25px;
    padding: 10px 0;
    background: #f1f1f1;
}

.arrow {
    border: 6px solid transparent;
}

.arrow.up {
    border-top: none;
    border-bottom-color: #505050;
}

.arrow.down {
    border-bottom: none;
    border-top-color: #505050;
}

.track {
    flex: 1;
    display: flex;
    flex-direction: column;
    justify-content: flex-end;
    padding-bottom: 51px;
}

.thumb {
    width: 21px;
    height: 78px;
    background: #c1c1c1;
}

/* Taskbar */
.taskbar {
    display: grid;
    grid-template-columns: 1fr auto 1fr;
    height: 72px;
    padding-left: 2px;
    border-top: 2px solid #a5bfc0;
    background: linear-gradient(to right, #d0f0ec, #d1f0e9 13%, #c9f1f2 22%, #caf1f2);
    color: #16191a;
    line-height: 24px;
}

.weather {
    display: flex;
    align-items: center;
    gap: 12px;
    padding: 0 0 2px 28px;
}

.weather svg {
    width: 35px;
    height: 35px;
}

.condition {
    color: #506060;
}

.apps {
    display: flex;
}

.apps button {
    position: relative;
    width: 66px;
}

.apps svg {
    position: relative;
    width: 36px;
    height: 36px;
}

.running::after {
    content: "";
    position: absolute;
    left: 50%;
    bottom: 7px;
    width: 9px;
    height: 5px;
    margin-left: -4px;
    border-radius: 3px;
    background: #738786;
}

.current::before {
    content: "";
    position: absolute;
    inset: 6px 5px 8px;
    border-radius: 6px;
    background: #e5f7f9;
    box-shadow: 0 1px 1px #b5d5d7;
}

.current::after {
    width: 24px;
    margin-left: -12px;
    background: var(--badge);
}

.badge {
    position: absolute;
    top: 9px;
    right: 6px;
    min-width: 25px;
    height: 24px;
    border-radius: 12px;
    background: var(--badge);
    color: #fff;
    font-size: 16px;
    line-height: 24px;
    text-align: center;
}

.badge.record {
    right: 9px;
    min-width: 21px;
    height: 21px;
    border: 6px solid #f05454;
    background: #fff;
}

.tray {
    display: flex;
    align-items: center;
    justify-content: flex-end;
    padding: 0 30px 2px 0;
    text-align: right;
}

.tray button {
    width: 36px;
    height: 48px;
}

.tray button:nth-child(2) {
    margin-right: 6px;
}

.tray svg {
    width: 24px;
    height: 24px;
    fill: none;
    stroke: #111;
    stroke-width: 1.5;
}

.tray time {
    width: 108px;
}

.notifications {
    width: 24px;
    height: 24px;
    margin-left: 18px;
    border-radius: 50%;
    background: #1d6a76;
    color: #fff;
    font-size: 16px;
    text-align: center;
}
```
